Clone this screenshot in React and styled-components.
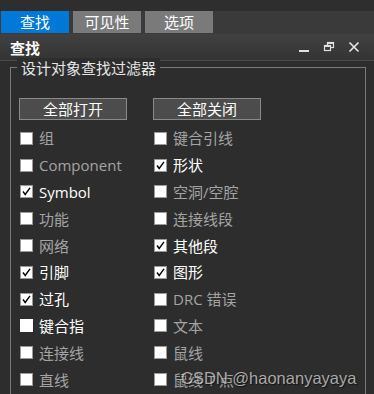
import React from "react";
import styled, { createGlobalStyle } from "styled-components";

const Global = createGlobalStyle`
  html, body { margin: 0; padding: 0; background: #2d2d2d; }
  body { width: 374px; height: 394px; overflow: hidden; font-family: "Noto Sans", "Noto Sans CJK SC", sans-serif; }
`;

const Page = styled.div`
  position: relative;
  width: 374px;
  height: 394px;
  background: #2d2d2d;
  display: flex;
  flex-direction: column;
  overflow: hidden;
`;

const TopStrip = styled.div`
  flex: none;
  height: 11px;
  background: #2e2e2e;
`;

const TabBar = styled.div`
  flex: none;
  height: 23px;
  background: #3a3a3a;
  display: flex;
  gap: 4px;
  padding-left: 1px;
`;

const Tab = styled.div`
  width: 68px;
  height: 22px;
  background: ${(p) => (p.$active ? "#0078d7" : "#7a7a7a")};
  color: #fff;
  font-size: 15px;
  line-height: 22px;
  text-align: center;
  font-family: "Noto Sans CJK SC", sans-serif;
`;

const TitleBar = styled.div`
  flex: none;
  height: 26px;
  background: linear-gradient(#414141, #343434);
  border-bottom: 1px solid #4a4a4a;
  display: flex;
  align-items: center;
  padding: 0 14px 0 10px;
`;

const Title = styled.div`
  color: #fff;
  font-weight: bold;
  font-size: 15px;
  font-family: "Noto Sans CJK SC", sans-serif;
  flex: 1;
`;

const WinButtons = styled.div`
  display: flex;
  align-items: center;
  gap: 13px;
`;

const Body = styled.div`
  flex: none;
  padding: 6px 8px 0 10px;
`;

const Group = styled.div`
  position: relative;
  border: 1px solid #7a7a7a;
  border-bottom: none;
  height: 340px;
  padding: 30px 0 0 8px;
`;

const GroupTitle = styled.div`
  position: absolute;
  top: -10px;
  left: 6px;
  padding: 0 4px;
  background: #2d2d2d;
  color: #e6e6e6;
  font-size: 15px;
  line-height: 20px;
  font-family: "Noto Sans CJK SC", sans-serif;
`;

const Grid = styled.div`
  display: grid;
  grid-template-columns: 134px 134px;
`;

const BtnCell = styled.div`
  height: 26px;
  margin-bottom: 1px;
`;

const Button = styled.div`
  width: 106px;
  height: 20px;
  background: #4c4c4c;
  border: 1px solid #8a8a8a;
  color: #fff;
  font-size: 15px;
  line-height: 20px;
  text-align: center;
  font-family: "Noto Sans CJK SC", sans-serif;
`;

const Row = styled.div`
  height: 26.8px;
  display: flex;
  align-items: center;
  gap: 6px;
  padding-left: 1px;
`;

const Box = styled.div`
  width: 11px;
  height: 11px;
  background: #fff;
  border: 1px solid ${(p) => (p.$solid ? "#fff" : "#9a9a9a")};
  display: flex;
  align-items: center;
  justify-content: center;
  flex: none;
`;

const Label = styled.span`
  color: ${(p) => (p.$on ? "#ffffff" : "#a4a4a4")};
  font-size: 15px;
  line-height: 20px;
  white-space: nowrap;
  font-family: "Open Sans", "Noto Sans CJK SC", sans-serif;
`;

const Watermark = styled.div`
  position: absolute;
  left: 181px;
  top: 369px;
  color: rgba(215, 215, 215, 0.75);
  font-size: 16.5px;
  font-family: "Liberation Sans", Arial, sans-serif;
  text-shadow: 1px 1px 1px rgba(0, 0, 0, 0.6);
  white-space: nowrap;
`;

const Check = () => (
  <svg width="11" height="11" viewBox="0 0 11 11">
    <path d="M2 5.5 L4.2 8.5 L9 1.8" stroke="#000" strokeWidth="1.4" fill="none" />
  </svg>
);

const Item = ({ label, on, checked, solid }) => (
  <Row>
    <Box $solid={solid}>{checked && <Check />}</Box>
    <Label $on={on}>{label}</Label>
  </Row>
);

const left = [
  { label: "组" },
  { label: "Component" },
  { label: "Symbol", on: true, checked: true },
  { label: "功能" },
  { label: "网络" },
  { label: "引脚", on: true, checked: true },
  { label: "过孔", on: true, checked: true },
  { label: "键合指", on: true, solid: true },
  { label: "连接线" },
  { label: "直线" },
];

const right = [
  { label: "键合引线" },
  { label: "形状", on: true, checked: true },
  { label: "空洞/空腔" },
  { label: "连接线段" },
  { label: "其他段", on: true, checked: true },
  { label: "图形", on: true, checked: true },
  { label: "DRC 错误" },
  { label: "文本" },
  { label: "鼠线" },
  { label: "鼠线 T 点" },
];

export default function App() {
  return (
    <Page>
      <Global />
      <TopStrip />
      <TabBar>
        <Tab $active>查找</Tab>
        <Tab>可见性</Tab>
        <Tab>选项</Tab>
      </TabBar>
      <TitleBar>
        <Title>查找</Title>
        <WinButtons>
          <svg width="12" height="12" viewBox="0 0 12 12">
            <rect x="1" y="9" width="10" height="2" fill="#e0e0e0" />
          </svg>
          <svg width="12" height="12" viewBox="0 0 12 12">
            <rect x="4.5" y="1.5" width="6" height="5" fill="none" stroke="#e0e0e0" strokeWidth="1.2" />
            <rect x="1.5" y="4.5" width="6" height="5" fill="#3a3a3a" stroke="#e0e0e0" strokeWidth="1.2" />
            <rect x="1.5" y="4.5" width="6" height="1.5" fill="#e0e0e0" />
            <rect x="4.5" y="1.5" width="6" height="1.5" fill="#e0e0e0" />
          </svg>
          <svg width="12" height="12" viewBox="0 0 12 12">
            <path d="M1.5 1.5 L10.5 10.5 M10.5 1.5 L1.5 10.5" stroke="#e8e8e8" strokeWidth="1.6" />
          </svg>
        </WinButtons>
      </TitleBar>
      <Body>
        <Group>
          <GroupTitle>设计对象查找过滤器</GroupTitle>
          <Grid>
            <BtnCell><Button>全部打开</Button></BtnCell>
            <BtnCell><Button>全部关闭</Button></BtnCell>
            {left.map((l, i) => (
              <React.Fragment key={i}>
                <Item {...l} />
                <Item {...right[i]} />
              </React.Fragment>
            ))}
          </Grid>
        </Group>
      </Body>
      <Watermark>CSDN @haonanyayaya</Watermark>
    </Page>
  );
}
